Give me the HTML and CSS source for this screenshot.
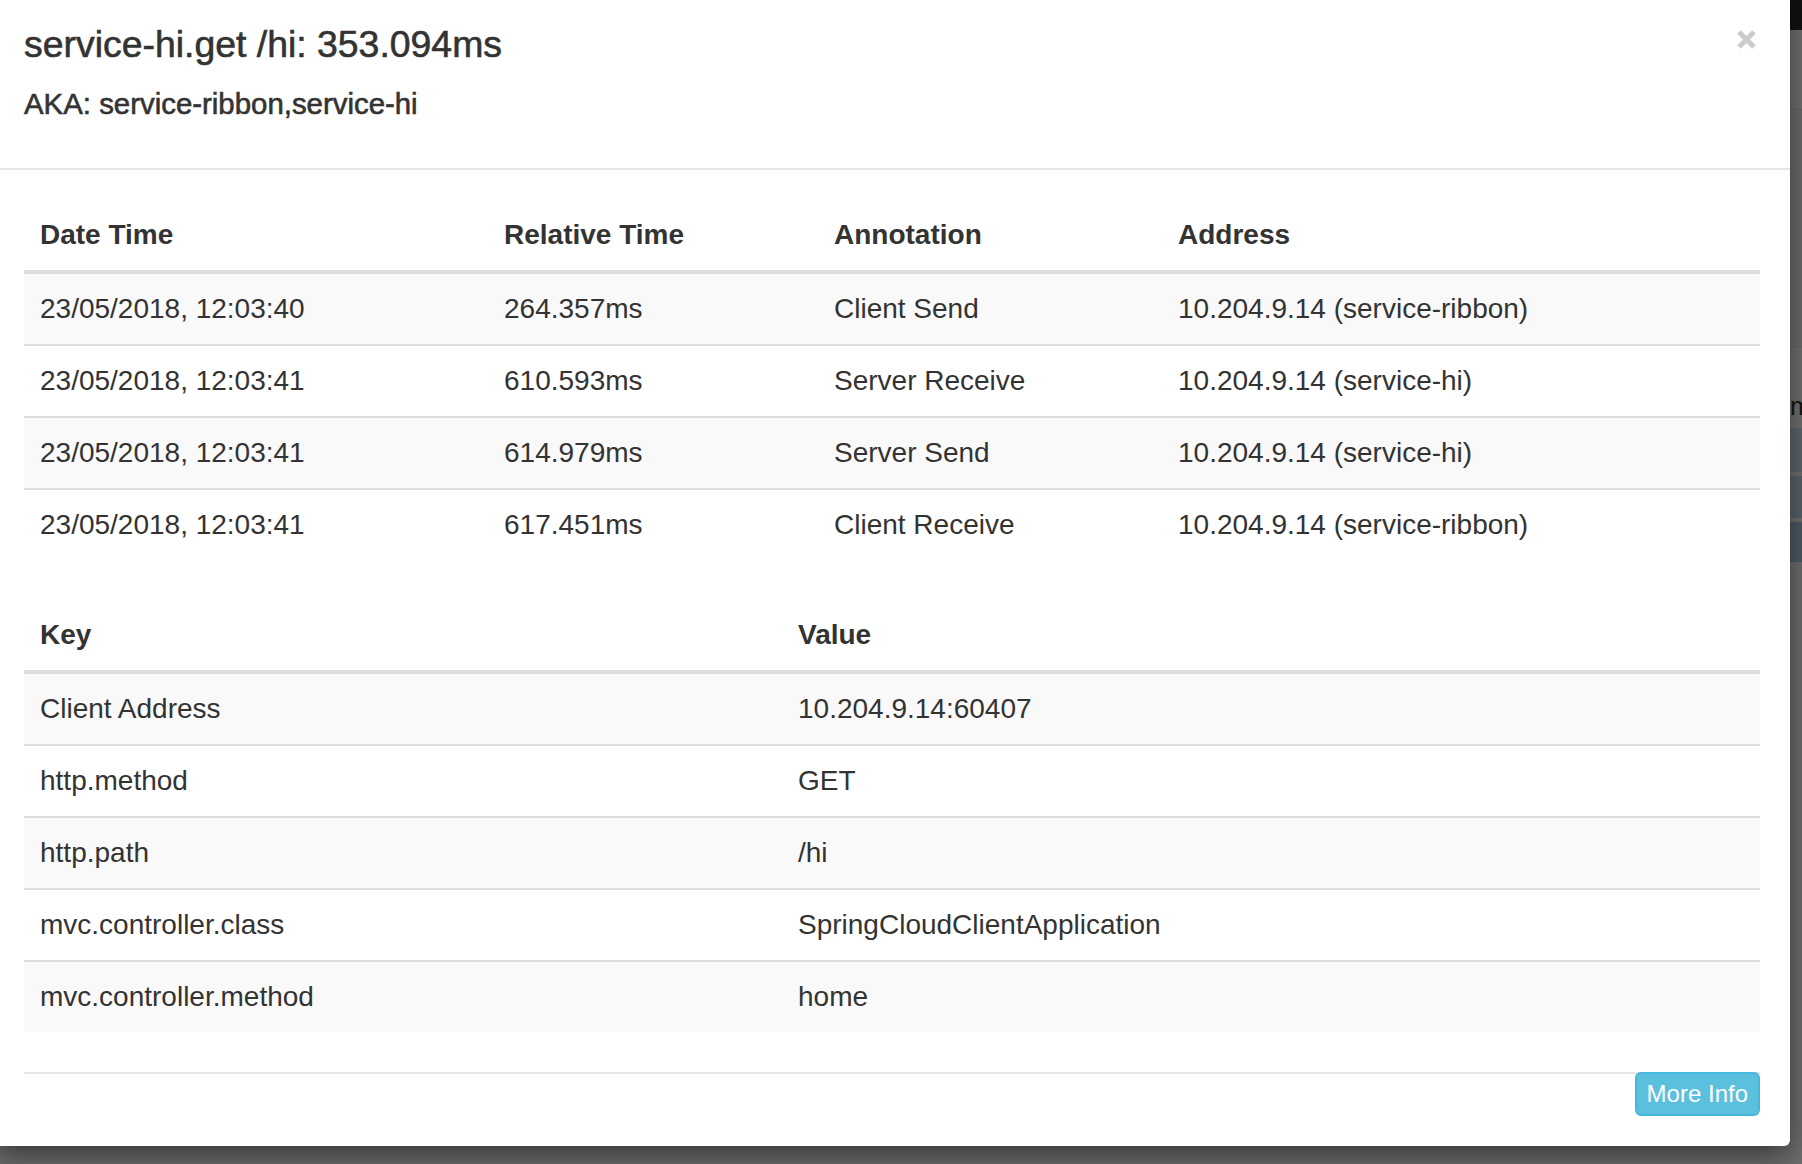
FILE: index.html
```html
<!DOCTYPE html>
<html lang="en">
<head>
    <meta charset="UTF-8">
    <meta name="viewport" content="width=device-width, initial-scale=1.0">
    <title>Span details</title>
    <link rel="stylesheet" href="styles.css">
</head>
<body>
    <div class="modal-content">
        <div class="modal-header">
            <div class="header-text">
                <h4 class="modal-title">service-hi.get /hi: 353.094ms</h4>
                <h5 class="aka">AKA: service-ribbon,service-hi</h5>
            </div>
            <button class="close" type="button" aria-label="Close">
                <svg width="21" height="21" viewBox="0 0 21 21">
                    <path d="M3 3 L18 18 M18 3 L3 18" stroke="currentColor" stroke-width="5" fill="none"/>
                </svg>
            </button>
        </div>

        <div class="modal-body">
            <table class="table table-striped">
                <colgroup>
                    <col class="col-date">
                    <col class="col-relative">
                    <col class="col-annotation">
                    <col>
                </colgroup>
                <thead>
                    <tr>
                        <th>Date Time</th>
                        <th>Relative Time</th>
                        <th>Annotation</th>
                        <th>Address</th>
                    </tr>
                </thead>
                <tbody>
                    <tr>
                        <td>23/05/2018, 12:03:40</td>
                        <td>264.357ms</td>
                        <td>Client Send</td>
                        <td>10.204.9.14 (service-ribbon)</td>
                    </tr>
                    <tr>
                        <td>23/05/2018, 12:03:41</td>
                        <td>610.593ms</td>
                        <td>Server Receive</td>
                        <td>10.204.9.14 (service-hi)</td>
                    </tr>
                    <tr>
                        <td>23/05/2018, 12:03:41</td>
                        <td>614.979ms</td>
                        <td>Server Send</td>
                        <td>10.204.9.14 (service-hi)</td>
                    </tr>
                    <tr>
                        <td>23/05/2018, 12:03:41</td>
                        <td>617.451ms</td>
                        <td>Client Receive</td>
                        <td>10.204.9.14 (service-ribbon)</td>
                    </tr>
                </tbody>
            </table>

            <table class="table table-striped">
                <colgroup>
                    <col class="col-key">
                    <col>
                </colgroup>
                <thead>
                    <tr>
                        <th>Key</th>
                        <th>Value</th>
                    </tr>
                </thead>
                <tbody>
                    <tr>
                        <td>Client Address</td>
                        <td>10.204.9.14:60407</td>
                    </tr>
                    <tr>
                        <td>http.method</td>
                        <td>GET</td>
                    </tr>
                    <tr>
                        <td>http.path</td>
                        <td>/hi</td>
                    </tr>
                    <tr>
                        <td>mvc.controller.class</td>
                        <td>SpringCloudClientApplication</td>
                    </tr>
                    <tr>
                        <td>mvc.controller.method</td>
                        <td>home</td>
                    </tr>
                </tbody>
            </table>

            <div class="modal-footer">
                <button class="btn btn-info" type="button">More Info</button>
            </div>
        </div>
    </div>

    <!-- what is left of the page behind the backdrop -->
    <div class="page-behind">
        <div class="navbar"></div>
        <div class="panel panel-top"></div>
        <div class="panel panel-mid"></div>
        <div class="panel panel-gap"></div>
        <div class="panel panel-text">m</div>
        <div class="row-blue row-a"></div>
        <div class="row-blue row-b"></div>
        <div class="row-blue row-c"></div>
    </div>
</body>
</html>
```

FILE: styles.css
```css
body {
    font-family: 'Liberation Sans', Arial, sans-serif;
    margin: 0;
    padding: 0;
    display: flex;
    align-items: flex-start;
    height: 100vh;
    overflow: hidden;
    background: #6e6e6e;
    color: #333;
}

.modal-content {
    position: relative;
    z-index: 1;
    flex: none;
    width: 1796px;
    margin: -6px 0 0 -6px;
    background: #fff;
    border-radius: 0 0 6px 6px;
    box-shadow: 0 10px 30px rgba(0, 0, 0, 0.5);
    box-sizing: border-box;
    padding-bottom: 30px;
}

.modal-header {
    display: flex;
    justify-content: space-between;
    align-items: flex-start;
    padding: 30px 30px 48px;
    border-bottom: 2px solid #e5e5e5;
}

.modal-title {
    margin: 0;
    font-size: 37.4px;
    font-weight: normal;
    line-height: 40px;
    -webkit-text-stroke: 0.6px #333;
}

.aka {
    margin: 24px 0 0;
    font-size: 29.4px;
    font-weight: normal;
    line-height: 32px;
    -webkit-text-stroke: 0.6px #333;
}

.close {
    margin: 5px 3px 0 0;
    padding: 0;
    border: none;
    background: none;
    color: #cbcbcb;
    cursor: pointer;
    display: flex;
}

.modal-body {
    padding: 30px 30px 0;
}

.table {
    width: 100%;
    table-layout: fixed;
    border-collapse: separate;
    border-spacing: 0;
    margin-bottom: 40px;
    font-size: 28px;
    line-height: 40px;
}

.col-date { width: 464px; }
.col-relative { width: 330px; }
.col-annotation { width: 344px; }
.col-key { width: 758px; }

.table th,
.table td {
    padding: 15px 16px;
    text-align: left;
    white-space: nowrap;
}

.table th {
    font-weight: bold;
    border-bottom: 4px solid #ddd;
}

.table td {
    border-top: 2px solid #ddd;
}

.table tbody tr:first-child td {
    border-top: none;
}

.table-striped tbody tr:nth-child(odd) {
    background-color: #f9f9f9;
}

.modal-footer {
    display: flex;
    justify-content: flex-end;
    border-top: 2px solid #e5e5e5;
}

.btn {
    margin-top: -2px;
    font-family: inherit;
    font-size: 24px;
    line-height: 36px;
    padding: 2px 10px;
    border-radius: 6px;
    cursor: pointer;
}

.btn-info {
    color: #fff;
    background-color: #5bc0de;
    border: 2px solid #46b8da;
}

/* page behind the backdrop, only a sliver shows */
.page-behind {
    flex: 1;
    align-self: stretch;
    overflow: hidden;
    display: flex;
    flex-direction: column;
}

.navbar {
    height: 30px;
    background: #111;
}

.panel {
    background: #707070;
}

.panel-top {
    height: 79px;
    border-bottom: 1px solid #666;
}

.panel-mid {
    height: 237px;
    background: #6b6b6b;
    border-bottom: 1px solid #656565;
}

.panel-gap {
    height: 41px;
}

.panel-text {
    height: 39px;
    font-size: 26px;
    line-height: 34px;
    color: #151515;
}

.row-blue {
    height: 44px;
}

.row-a {
    background: #5e666c;
    border-bottom: 4px solid #6f6f6f;
}

.row-b {
    height: 42px;
    background: #59626a;
    border-bottom: 4px solid #6f6f6f;
}

.row-c {
    height: 40px;
    background: #4c5a66;
}
```
